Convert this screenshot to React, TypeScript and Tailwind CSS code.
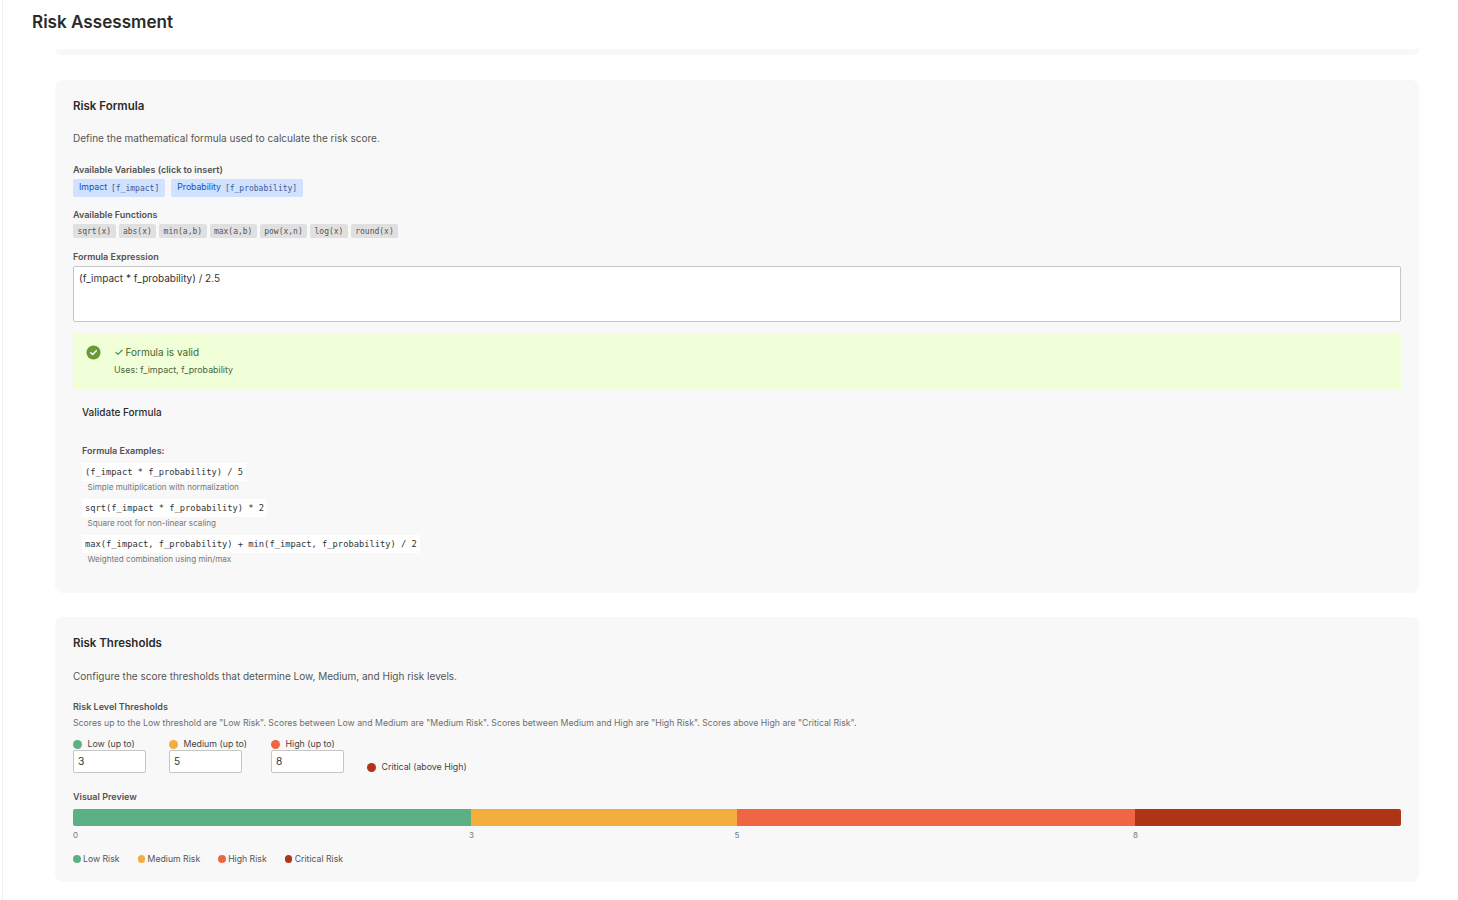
import React from 'react';

const variables = ['Impact [f_impact]', 'Probability [f_probability]'];
const fns = ['sqrt(x)', 'abs(x)', 'min(a,b)', 'max(a,b)', 'pow(x,n)', 'log(x)', 'round(x)'];

const examples = [
  { code: '(f_impact * f_probability) / 5', note: 'Simple multiplication with normalization' },
  { code: 'sqrt(f_impact * f_probability) * 2', note: 'Square root for non-linear scaling' },
  { code: 'max(f_impact, f_probability) + min(f_impact, f_probability) / 2', note: 'Weighted combination using min/max' },
];

const mono = "font-['DejaVu_Sans_Mono',monospace]";

const Label = ({ children, className = '' }: { children: React.ReactNode; className?: string }) => (
  <div className={`text-[9px] leading-[12px] font-semibold text-[#525252] ${className}`}>{children}</div>
);

const App: React.FC = () => {
  return (
    <div className="min-h-[900px] bg-white font-['Inter',sans-serif] text-[#2b2b2b]">
      <div className="ml-[2px] min-h-[900px] border-l border-[#efefef] pb-[17px]">
        <h1 className="pl-[29px] pt-[10px] text-[17.1px] leading-[24px] font-semibold text-[#2a2a2a]">Risk Assessment</h1>

        <div className="ml-[52px] mr-[39px] mt-[15px] h-[6px] rounded-b-lg bg-[#f8f8f8]" />

        {/* Risk Formula */}
        <section className="ml-[52px] mr-[39px] mt-[25px] h-[513px] rounded-lg bg-[#f8f8f8] px-[18px] pt-[18px]">
          <h2 className="text-[11.5px] leading-[16px] font-semibold text-[#2b2b2b]">Risk Formula</h2>
          <p className="mt-[16px] text-[10px] leading-[16px] text-[#555]">Define the mathematical formula used to calculate the risk score.</p>

          <Label className="mt-[18px]">Available Variables (click to insert)</Label>
          <div className="mt-[3px] flex gap-[6px]">
            {variables.map((v) => {
              const [name, key] = v.split(' ');
              return (
                <span key={v} className="flex h-[18px] items-center rounded-[2px] bg-[#d0e2ff] px-[6px] text-[8.7px] text-[#0f4fc4]">
                  {name}
                  <span className={`${mono} ml-[4px] pt-[1px] text-[8px] text-[#3f5a94]`}>{key}</span>
                </span>
              );
            })}
          </div>

          <Label className="mt-[12px]">Available Functions</Label>
          <div className="mt-[3px] flex gap-[3px]">
            {fns.map((f) => (
              <span key={f} className={`${mono} flex h-[14px] items-center rounded-[2px] bg-[#e0e0e0] px-[4.4px] pt-[1px] text-[8px] text-[#555]`}>{f}</span>
            ))}
          </div>

          <Label className="mt-[13px]">Formula Expression</Label>
          <div className="mt-[3px] h-[56px] rounded-[2px] border border-[#c6c6c6] bg-white px-[5px] py-[4px] text-[10px] leading-[14px] text-[#333]">
            (f_impact * f_probability) / 2.5
          </div>

          <div className="mt-[11px] flex h-[56px] bg-[#f0ffd8] pl-[13px] pt-[12px]">
            <svg width="15" height="15" viewBox="0 0 16 16" className="shrink-0">
              <circle cx="8" cy="8" r="7.5" fill="#6a9a33" />
              <path d="M5 8.2l2.1 2 3.9-4" fill="none" stroke="#fff" strokeWidth="1.6" strokeLinecap="round" strokeLinejoin="round" />
            </svg>
            <div className="ml-[13px]">
              <div className="h-[15px] text-[10px] leading-[15px] text-[#48672a]">
                <span className="inline-block w-[11.5px] text-[11px] leading-[10px]">✓</span>Formula is valid
              </div>
              <div className="mt-[3px] text-[8.9px] leading-[14px] text-[#4f5f3f]">Uses: f_impact, f_probability</div>
            </div>
          </div>

          <div className="ml-[9px] mt-[16px] text-[10px] leading-[14px] font-medium text-[#2b2b2b]">Validate Formula</div>

          <div className="ml-[9px] mt-[26px]">
            <Label>Formula Examples:</Label>
            <div className="mt-[6px] flex flex-col gap-[6px]">
              {examples.map((e) => (
                <div key={e.code}>
                  <code className={`${mono} flex h-[18px] w-fit items-center bg-white px-[3px] pt-[1px] text-[8.75px] text-[#333]`}>{e.code}</code>
                  <div className="mt-[1px] pl-[5.5px] text-[8.1px] leading-[11px] text-[#777]">{e.note}</div>
                </div>
              ))}
            </div>
          </div>
        </section>

        {/* Risk Thresholds */}
        <section className="ml-[52px] mr-[39px] mt-[24px] h-[265px] rounded-lg bg-[#f8f8f8] px-[18px] pt-[18px]">
          <h2 className="text-[11.5px] leading-[16px] font-semibold text-[#2b2b2b]">Risk Thresholds</h2>
          <p className="mt-[17px] text-[10px] leading-[16px] text-[#555]">Configure the score thresholds that determine Low, Medium, and High risk levels.</p>

          <Label className="mt-[17px]">Risk Level Thresholds</Label>
          <div className="mt-[5px] text-[8.72px] leading-[11px] text-[#6f6f6f]">
            Scores up to the Low threshold are "Low Risk". Scores between Low and Medium are "Medium Risk". Scores between Medium and High are "High Risk". Scores above High are "Critical Risk".
          </div>

          <div className="mt-[10px] flex items-start">
            <Threshold color="bg-[#5cb083]" label="Low (up to)" value="3" className="w-[96px]" />
            <Threshold color="bg-[#f4ae3d]" label="Medium (up to)" value="5" className="w-[102px]" />
            <Threshold color="bg-[#ef6642]" label="High (up to)" value="8" className="w-[96px]" />
            <div className="mt-[23px] flex h-[10px] items-center">
              <span className="h-[9px] w-[9px] rounded-full bg-[#ae3516]" />
              <span className="ml-[5.5px] text-[8.8px] text-[#444]">Critical (above High)</span>
            </div>
          </div>

          <Label className="mt-[18px]">Visual Preview</Label>
          <div className="mt-[6px] flex h-[17px] overflow-hidden rounded-[2px]">
            <div className="w-[30%] bg-[#5cb083]" />
            <div className="w-[20%] bg-[#f4ae3d]" />
            <div className="w-[30%] bg-[#ef6642]" />
            <div className="w-[20%] bg-[#ae3516]" />
          </div>
          <div className="relative mt-[5px] h-[9px] text-[8px] leading-[9px] text-[#777]">
            <span className="absolute left-0">0</span>
            <span className="absolute left-[30%] -translate-x-1/2">3</span>
            <span className="absolute left-[50%] -translate-x-1/2">5</span>
            <span className="absolute left-[80%] -translate-x-1/2">8</span>
          </div>

          <div className="mt-[13px] flex gap-[18px] text-[8.7px] leading-[12px] text-[#555]">
            <Legend color="bg-[#5cb083]" label="Low Risk" />
            <Legend color="bg-[#f4ae3d]" label="Medium Risk" />
            <Legend color="bg-[#ef6642]" label="High Risk" />
            <Legend color="bg-[#ae3516]" label="Critical Risk" />
          </div>
        </section>
      </div>
    </div>
  );
};

const Threshold = ({ color, label, value, className }: { color: string; label: string; value: string; className: string }) => (
  <div className={className}>
    <div className="flex h-[10px] items-center">
      <span className={`h-[9px] w-[9px] rounded-full ${color}`} />
      <span className="ml-[5.5px] text-[8.8px] text-[#444]">{label}</span>
    </div>
    <div className="mt-[1px] flex h-[23px] w-[73px] items-center rounded-[2px] border border-[#c6c6c6] bg-white pl-[4px] text-[10.2px] text-[#333]">{value}</div>
  </div>
);

const Legend = ({ color, label }: { color: string; label: string }) => (
  <div className="flex items-center gap-[2.5px]">
    <span className={`h-[7.5px] w-[7.5px] rounded-full ${color}`} />
    <span>{label}</span>
  </div>
);

export default App;
